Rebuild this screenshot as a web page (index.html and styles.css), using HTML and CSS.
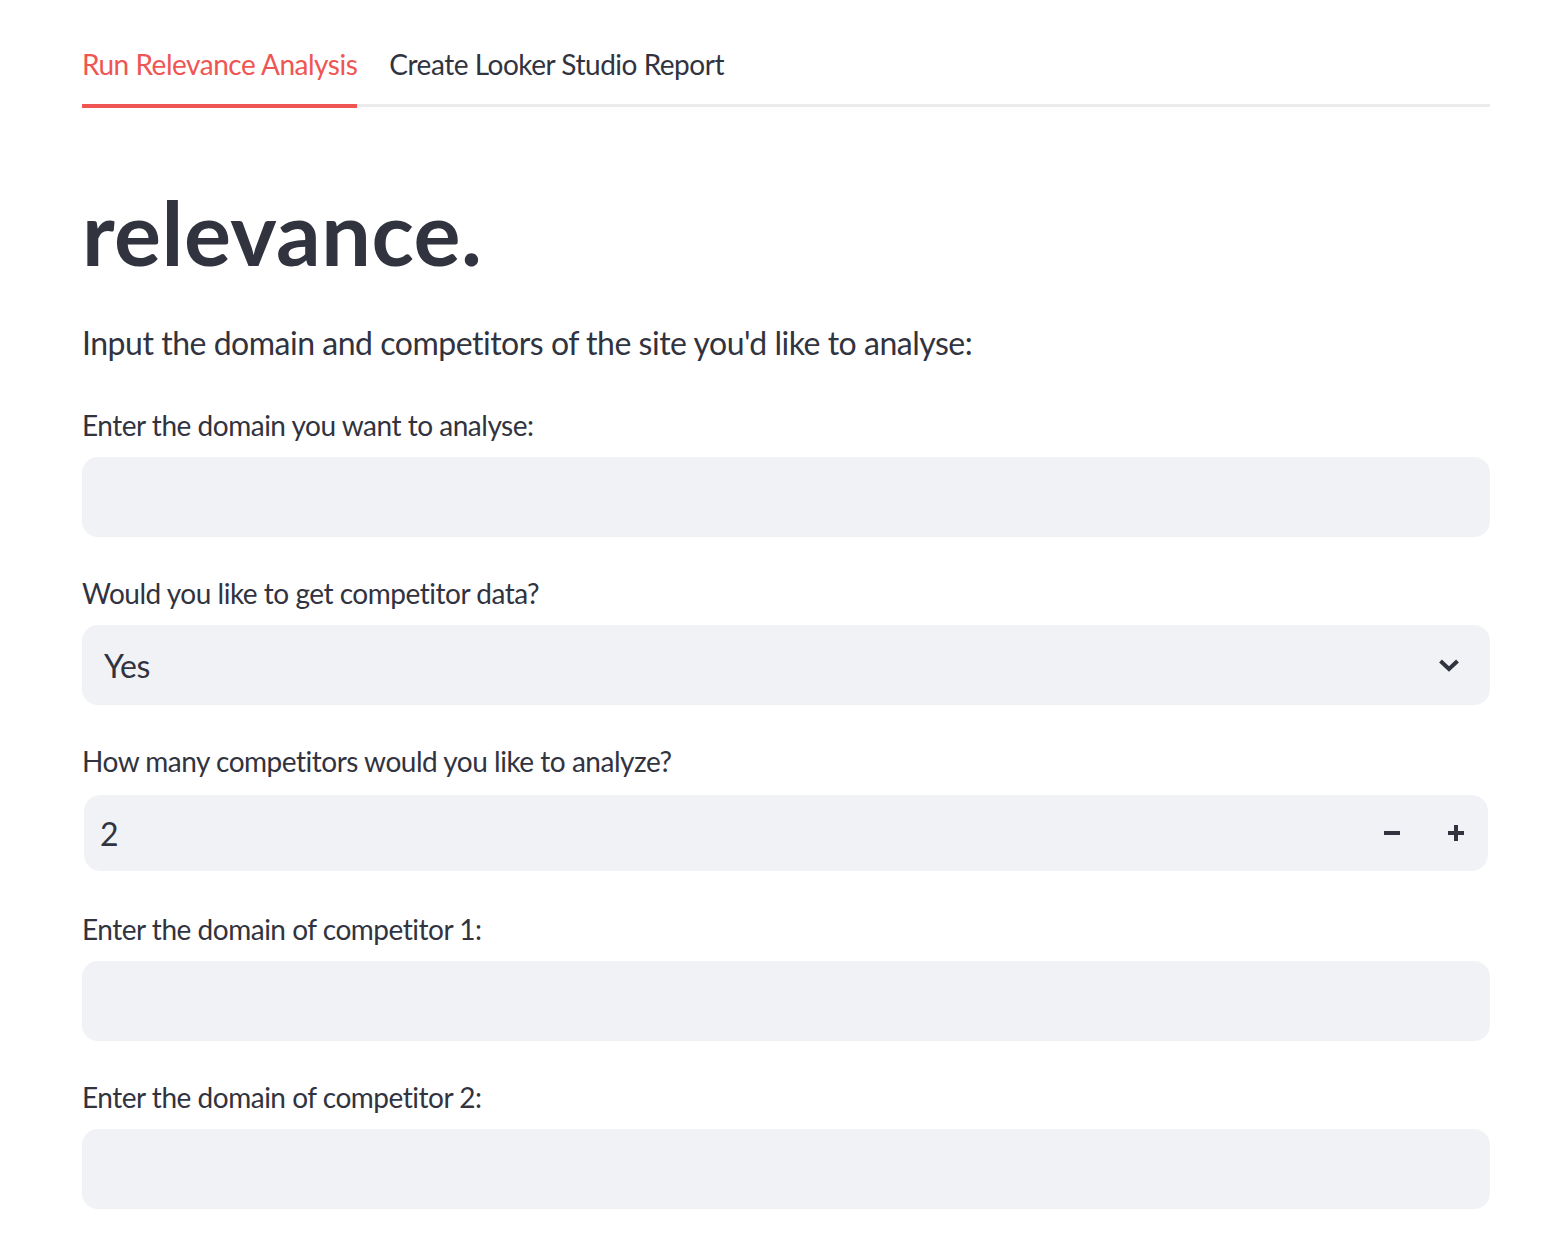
FILE: index.html
```html
<!DOCTYPE html>
<html lang="en">
<head>
<meta charset="utf-8">
<title>relevance.</title>
<link rel="stylesheet" href="styles.css">
</head>
<body>
<main class="page">
  <nav class="tabs">
    <div class="tab active">Run Relevance Analysis</div>
    <div class="tab">Create Looker Studio Report</div>
  </nav>

  <h1 class="title">relevance.</h1>
  <p class="intro">Input the domain and competitors of the site you'd like to analyse:</p>

  <div class="field">
    <label class="label">Enter the domain you want to analyse:</label>
    <div class="input"></div>
  </div>

  <div class="field">
    <label class="label">Would you like to get competitor data?</label>
    <div class="input select">
      <span class="value">Yes</span>
      <svg class="chevron" width="22" height="15" viewBox="0 0 22 15"><path d="M2.5 3 L11 11 L19.5 3" fill="none" stroke="#31333f" stroke-width="4" stroke-linecap="butt" stroke-linejoin="miter"/></svg>
    </div>
  </div>

  <div class="field">
    <label class="label">How many competitors would you like to analyze?</label>
    <div class="input number">
      <span class="value">2</span>
      <div class="steppers">
        <span class="step"><svg width="16" height="16" viewBox="0 0 16 16"><rect x="0" y="6" width="16" height="4" fill="#31333f"/></svg></span>
        <span class="step"><svg width="16" height="16" viewBox="0 0 16 16"><rect x="0" y="6" width="16" height="4" fill="#31333f"/><rect x="6" y="0" width="4" height="16" fill="#31333f"/></svg></span>
      </div>
    </div>
  </div>

  <div class="field">
    <label class="label">Enter the domain of competitor 1:</label>
    <div class="input"></div>
  </div>

  <div class="field">
    <label class="label">Enter the domain of competitor 2:</label>
    <div class="input"></div>
  </div>
</main>
</body>
</html>
```

FILE: styles.css
```css
* { box-sizing: border-box; }

html, body {
  margin: 0;
  padding: 0;
  background: #ffffff;
}

body {
  font-family: "Lato", "Noto Sans", sans-serif;
  color: #31333f;
  letter-spacing: -0.03em;
}

.page {
  width: 1408px;
  margin-left: 82px;
  padding-top: 24px;
  display: flex;
  flex-direction: column;
}

.tabs {
  position: relative;
  display: flex;
  gap: 32px;
  height: 84px;
}

.tabs::after {
  content: "";
  position: absolute;
  left: 0;
  right: 0;
  bottom: 1px;
  height: 3px;
  background: #ebebed;
}

.tab {
  position: relative;
  z-index: 1;
  height: 84px;
  display: flex;
  align-items: center;
  font-size: 28px;
  color: #31333f;
  border-bottom: 4px solid transparent;
}

.tab.active {
  color: #ef5552;
  border-bottom-color: #ef5552;
}

.title {
  margin: 71px 0 0;
  height: 106px;
  line-height: 106px;
  font-size: 88px;
  font-weight: 700;
  letter-spacing: 0.5px;
  color: #31333f;
}

.intro {
  margin: 34px 0 0;
  height: 48px;
  line-height: 48px;
  font-size: 32px;
}

.field {
  display: flex;
  flex-direction: column;
  gap: 12px;
  margin-top: 38px;
}

.field + .field {
  margin-top: 36px;
}

.label {
  height: 40px;
  line-height: 40px;
  font-size: 28px;
}

.input {
  height: 80px;
  border-radius: 16px;
  background: #f0f2f6;
  display: flex;
  align-items: center;
  font-size: 32px;
}

.select {
  justify-content: space-between;
  padding: 0 30px 0 22px;
}

.chevron {
  display: block;
}

.number {
  border: 2px solid #ffffff;
  background-clip: padding-box;
  border-radius: 18px;
  justify-content: space-between;
  padding-left: 16px;
}

.steppers {
  display: flex;
  height: 100%;
}

.step {
  width: 64px;
  height: 100%;
  display: flex;
  align-items: center;
  justify-content: center;
}

.step svg {
  display: block;
}
```
